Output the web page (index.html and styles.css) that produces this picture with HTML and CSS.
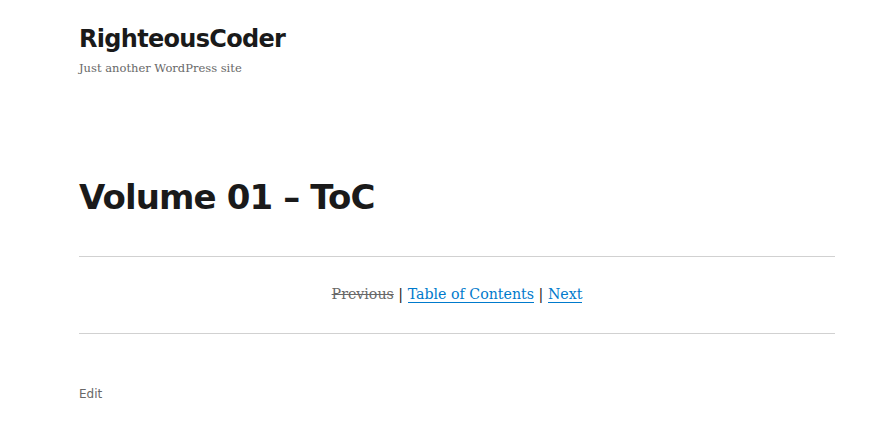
FILE: index.html
```html
<!DOCTYPE html>
<html>
<head>
<meta charset="utf-8">
<link rel="stylesheet" href="styles.css">
</head>
<body>
<div class="page">
  <header class="site-header">
    <p class="site-title">RighteousCoder</p>
    <p class="site-description">Just another WordPress site</p>
  </header>
  <main class="entry">
    <h1 class="entry-title">Volume 01 – ToC</h1>
    <div class="entry-content">
      <div class="toc-nav">
        <span class="prev">Previous</span> <span class="sep">|</span> <a href="#" class="link">Table of Contents</a> <span class="sep">|</span> <a href="#" class="link">Next</a>
      </div>
    </div>
    <footer class="entry-footer">
      <a href="#" class="edit">Edit</a>
    </footer>
  </main>
</div>
</body>
</html>
```
FILE: styles.css
```css
html, body {
  margin: 0;
  padding: 0;
  background: #fff;
}
.page {
  padding: 22px 45px 0 79px;
  display: flex;
  flex-direction: column;
}
.site-header {
  display: flex;
  flex-direction: column;
}
.site-title {
  margin: 0;
  font-family: "DejaVu Sans", sans-serif;
  font-weight: 700;
  font-size: 24px;
  line-height: 34px;
  color: #1a1a1a;
  letter-spacing: -0.7px;
}
.site-description {
  margin: 2px 0 0;
  font-family: "DejaVu Serif", serif;
  font-size: 11.5px;
  line-height: 20px;
  color: #686868;
}
.entry {
  margin-top: 95px;
}
.entry-title {
  margin: 0;
  font-family: "DejaVu Sans", sans-serif;
  font-weight: 700;
  font-size: 34px;
  line-height: 48px;
  color: #1a1a1a;
  letter-spacing: -0.9px;
}
.entry-content {
  margin-top: 35px;
  border-top: 1px solid #d1d1d1;
  border-bottom: 1px solid #d1d1d1;
  padding: 26px 0 28px;
}
.toc-nav {
  text-align: center;
  font-family: "DejaVu Serif", serif;
  font-size: 14.2px;
  line-height: 22px;
  color: #1a1a1a;
}
.prev {
  color: #686868;
  text-decoration: line-through;
}
.sep {
  color: #1a1a1a;
}
.link {
  color: #007acc;
  text-decoration: none;
  box-shadow: 0 1px 0 0 currentColor;
}
.entry-footer {
  margin-top: 50px;
}
.edit {
  font-family: "DejaVu Sans", sans-serif;
  font-size: 12px;
  line-height: 16px;
  color: #686868;
  text-decoration: none;
}
```
